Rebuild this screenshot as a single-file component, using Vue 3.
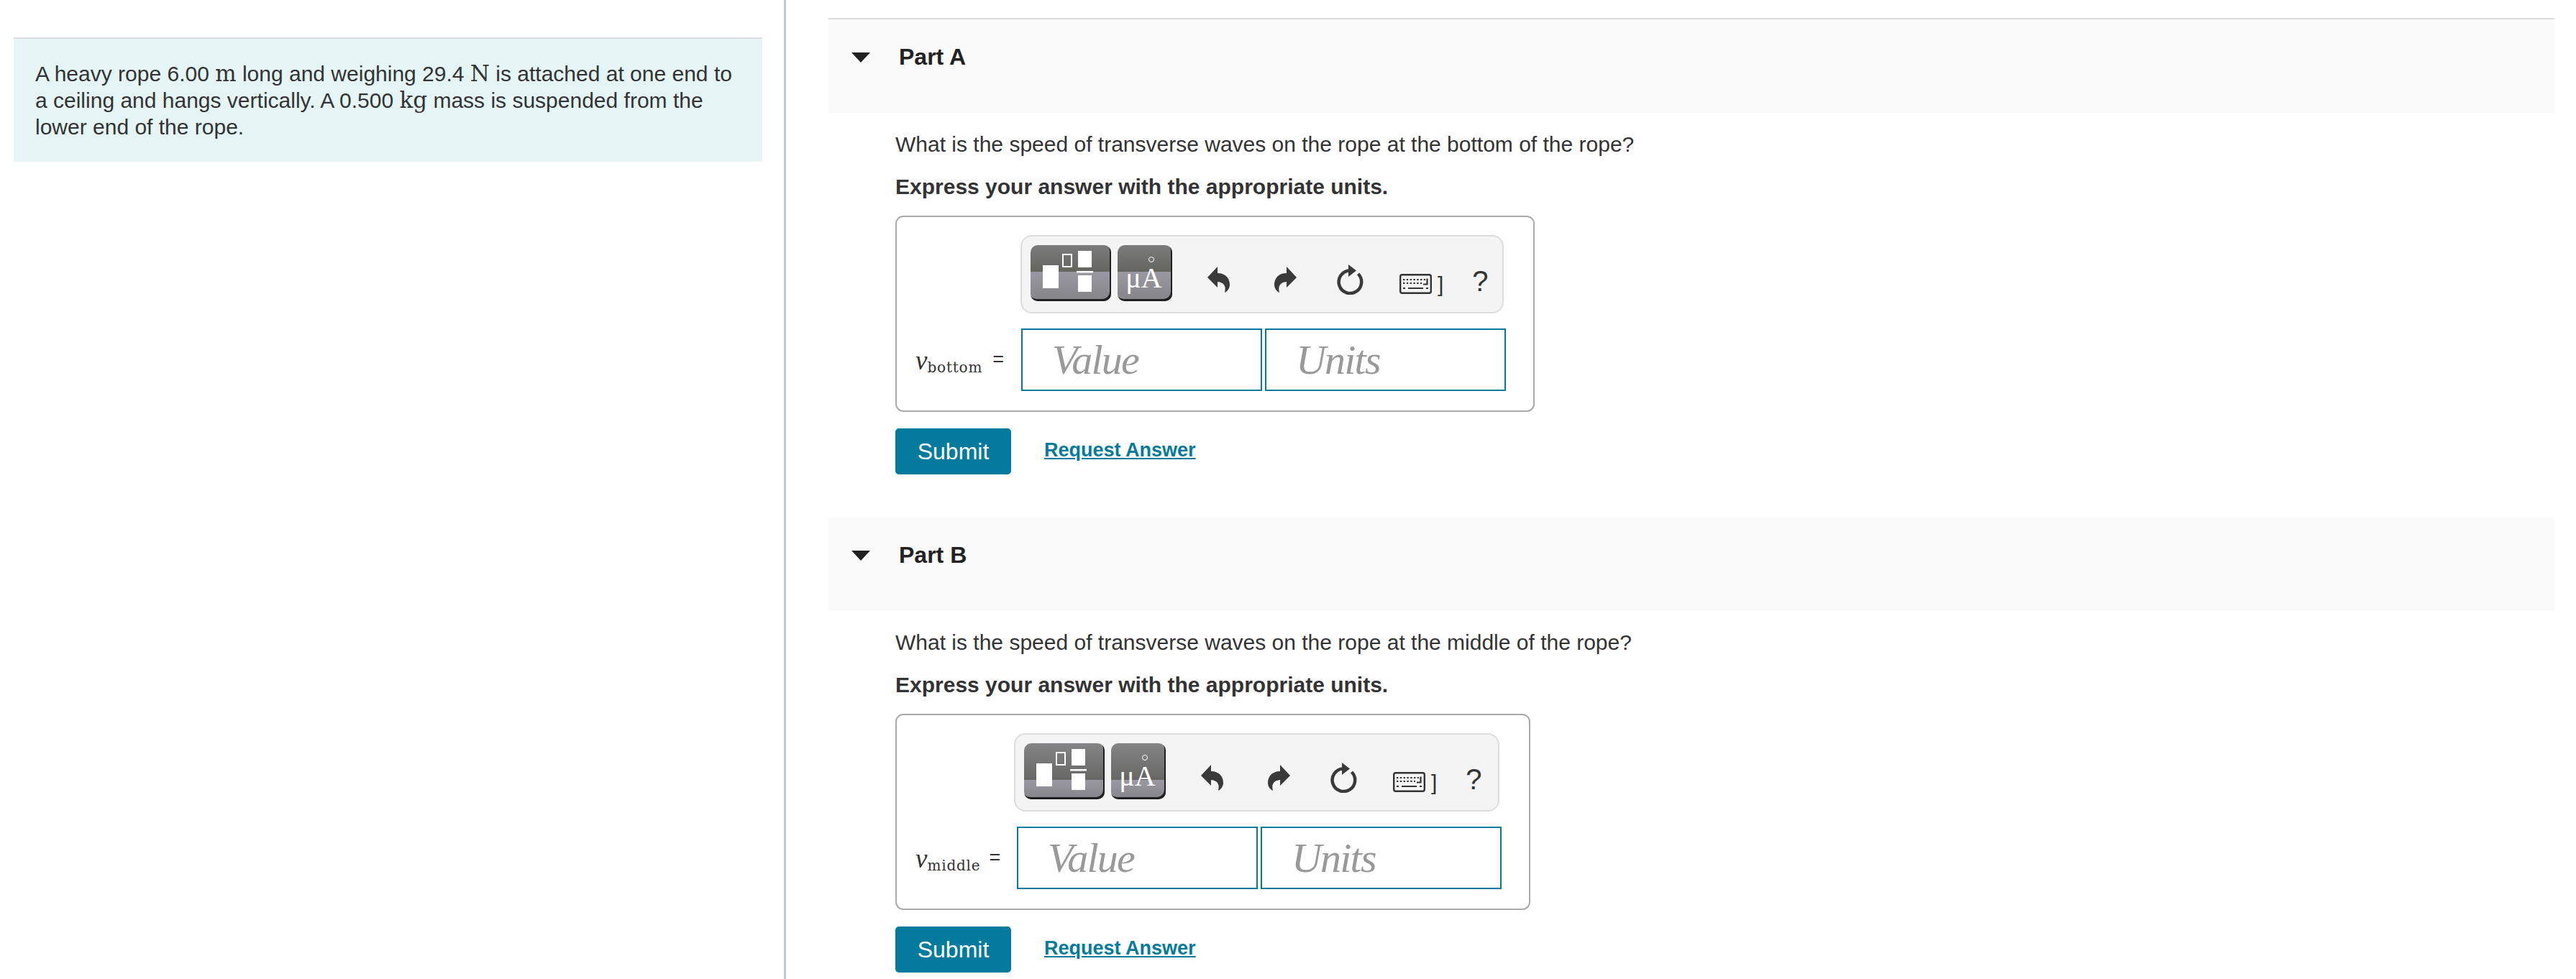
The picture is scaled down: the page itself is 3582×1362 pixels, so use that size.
<template>
  <div class="page">
    <!-- LEFT PANEL -->
    <aside class="side">
      <div class="intro">
        <p>
          A heavy rope 6.00 <span class="math">m</span> long and weighing 29.4 <span class="math">N</span> is attached at one end to
          a ceiling and hangs vertically. A 0.500 <span class="math">kg</span> mass is suspended from the
          lower end of the rope.
        </p>
      </div>
    </aside>

    <!-- PARTS -->
    <main class="parts">
      <section v-for="part in parts" :key="part.name" class="part" :class="part.cls">
        <header class="part-head">
          <span class="arrow"></span>
          <h2>{{ part.name }}</h2>
        </header>
        <div class="part-body">
          <p class="question">{{ part.question }}</p>
          <p class="hint">Express your answer with the appropriate units.</p>

          <div class="answer-box">
            <div class="toolbar">
              <button class="tool tool-tpl" type="button">
                <svg viewBox="0 0 112 78" width="112" height="78">
                  <rect x="17" y="28" width="22" height="32" fill="#fff" />
                  <rect x="45" y="13" width="12" height="17" fill="none" stroke="#fff" stroke-width="2" />
                  <rect x="66" y="8" width="19" height="23" fill="#fff" />
                  <rect x="64" y="36" width="23" height="2.5" fill="#fff" />
                  <rect x="66" y="42" width="19" height="23" fill="#fff" />
                </svg>
              </button>
              <button class="tool tool-unit" type="button"><span class="ring"></span>μA</button>

              <svg class="ico undo" viewBox="0 0 32 36" width="32" height="36">
                <path d="M0 15 L14 0 V9 C26 9 31 17 31 25 C31 30 28 34 24 36 C26 28 24 22 14 21 V29 Z" fill="#3a3a3a" />
              </svg>
              <svg class="ico redo" viewBox="0 0 32 36" width="32" height="36">
                <path d="M32 15 L18 0 V9 C6 9 1 17 1 25 C1 30 4 34 8 36 C6 28 8 22 18 21 V29 Z" fill="#3a3a3a" />
              </svg>
              <svg class="ico reset" viewBox="0 0 38 42" width="38" height="42">
                <path d="M17 8.5 A15.8 15.8 0 1 0 29.5 13" fill="none" stroke="#3a3a3a" stroke-width="4.5" />
                <path d="M16 0 L27 8.5 L16 17 Z" fill="#3a3a3a" />
              </svg>
              <svg class="ico keys" viewBox="0 0 45 28" width="45" height="28">
                <rect x="1.2" y="1.2" width="42.6" height="25.6" rx="2.5" fill="none" stroke="#333" stroke-width="2.4" />
                <path d="M5 8 H36 M5 13 H31" fill="none" stroke="#333" stroke-width="2.2" stroke-dasharray="2.4 2.4" />
                <path d="M38.5 6.5 V14.5 H33 M12 20 H33 M5 20 H8 M37 20 H40" fill="none" stroke="#333" stroke-width="2.2" />
              </svg>
              <span class="bracket">]</span>
              <span class="help">?</span>
            </div>

            <div class="answer-row">
              <span class="label"><i>v</i><sub>{{ part.sub }}</sub><span class="eq">=</span></span>
              <input class="field" type="text" placeholder="Value" />
              <input class="field" type="text" placeholder="Units" />
            </div>
          </div>

          <div class="actions">
            <button class="submit" type="button">Submit</button>
            <a class="request" href="#" @click.prevent>Request Answer</a>
          </div>
        </div>
      </section>
    </main>
  </div>
</template>

<script setup>
const parts = [
  {
    name: 'Part A',
    cls: 'part-a',
    sub: 'bottom',
    question: 'What is the speed of transverse waves on the rope at the bottom of the rope?'
  },
  {
    name: 'Part B',
    cls: 'part-b',
    sub: 'middle',
    question: 'What is the speed of transverse waves on the rope at the middle of the rope?'
  }
]
</script>

<style>
html,
body {
  margin: 0;
  background: #fff;
}
</style>

<style scoped>
.page {
  display: flex;
  width: 3582px;
  height: 1362px;
  overflow: hidden;
  font-family: "Liberation Sans", Arial, sans-serif;
  font-size: 30px;
  line-height: 37px;
  color: #333;
}

/* LEFT */
.side {
  width: 1093px;
  flex: none;
  box-sizing: border-box;
  padding: 52px 30px 0 19px;
  border-right: 3px solid #b9cde0;
}

.intro {
  height: 173px;
  box-sizing: border-box;
  padding: 30px 30px 0 30px;
  background: #e5f5f6;
  border-top: 2px solid #ddd;
}

.intro p {
  margin: 0;
}

.math {
  font-family: "DejaVu Serif", serif;
  font-size: 31px;
  line-height: 1;
}

/* PARTS */
.parts {
  flex: 1;
  padding: 25px 30px 0 59px;
}

.part-b {
  margin-top: 60px;
}

.part-head {
  height: 130px;
  display: flex;
  align-items: flex-start;
  background: #f9f9f9;
  margin: 0;
}

.part-a .part-head {
  height: 132px;
  box-sizing: border-box;
  border-top: 2px solid #ddd;
}

.arrow {
  width: 0;
  height: 0;
  margin: 46px 0 0 32px;
  border-left: 13px solid transparent;
  border-right: 13px solid transparent;
  border-top: 14px solid #222;
}

.part-head h2 {
  margin: 34px 0 0 40px;
  font-size: 32px;
  line-height: 37px;
  font-weight: 700;
  color: #222;
}

.part-body {
  padding-left: 93px;
}

.question {
  margin: 25px 0 0;
}

.hint {
  margin: 22px 0 0;
  font-weight: 700;
}

.answer-box {
  display: inline-flex;
  flex-direction: column;
  box-sizing: border-box;
  height: 273px;
  margin-top: 22px;
  padding: 25px 38px 0 26px;
  border: 2px solid #aaa;
  border-radius: 11px;
  vertical-align: top;
}

.toolbar {
  display: flex;
  align-items: flex-start;
  align-self: flex-end;
  box-sizing: border-box;
  width: 672px;
  height: 109px;
  margin-right: 3px;
  padding: 12px 0 0 12px;
  background: #f4f4f4;
  border: 2px solid #ddd;
  border-radius: 16px;
}

.part-b .toolbar {
  width: 675px;
}

.tool {
  position: relative;
  box-sizing: border-box;
  height: 78px;
  padding: 0;
  border: 0;
  border-radius: 10px;
  color: #fff;
  overflow: hidden;
  background: linear-gradient(#7b7b7d 0%, #65655f 47%, #9a98a2 47%, #858489 100%);
  box-shadow: inset -2px -3px 0 #1f1f1f;
}

.part-b .tool {
  background: linear-gradient(#858587 0%, #666664 66%, #9a98a2 66%, #858489 100%);
}

.tool-tpl {
  width: 112px;
}

.tool-tpl svg {
  display: block;
}

.tool-unit {
  width: 76px;
  margin-left: 9px;
  padding: 14px 3px 0 0;
  font-family: "Liberation Serif", serif;
  font-size: 40px;
  line-height: 46px;
}

.ring {
  position: absolute;
  left: 43px;
  top: 16px;
  width: 8px;
  height: 8px;
  box-sizing: border-box;
  border: 1.5px solid #fff;
  border-radius: 50%;
}

.ico {
  flex: none;
}

.undo {
  margin: 30px 0 0 49px;
}

.redo {
  margin: 30px 0 0 60px;
}

.reset {
  margin: 27px 0 0 56px;
}

.keys {
  margin: 40px 0 0 49px;
}

.bracket {
  margin: 36px 0 0 8px;
  font-size: 30px;
  line-height: 37px;
  color: #333;
}

.help {
  margin: 27px 0 0 40px;
  font-size: 40px;
  line-height: 46px;
  color: #333;
}

.answer-row {
  display: flex;
  align-items: center;
  margin-top: 21px;
}

.label {
  width: 147px;
  flex: none;
  font-family: "Liberation Serif", serif;
  white-space: nowrap;
  font-size: 37px;
  line-height: 40px;
}

.part-b .label {
  width: 141px;
}

.label sub {
  font-family: "DejaVu Serif", serif;
  font-size: 20px;
  letter-spacing: 0.8px;
  line-height: 0;
  vertical-align: -4px;
}

.eq {
  margin-left: 14px;
  font-family: "Liberation Sans", sans-serif;
  font-size: 27px;
  vertical-align: 5px;
}

.part-b .eq {
  margin-left: 12px;
}

.field {
  width: 335px;
  height: 87px;
  box-sizing: border-box;
  padding: 0 0 0 41px;
  border: 2px solid #047b9c;
  border-radius: 0;
  outline: none;
  font-family: "Liberation Serif", serif;
  font-style: italic;
  font-size: 58px;
  letter-spacing: -1.8px;
  color: #333;
  background: #fff;
}

.field + .field {
  margin-left: 4px;
}

.field::placeholder {
  color: #999;
  opacity: 1;
}

.actions {
  display: flex;
  align-items: center;
  margin-top: 23px;
}

.submit {
  width: 161px;
  height: 64px;
  padding: 0;
  border: 0;
  border-radius: 5px;
  background: #047b9c;
  color: #fff;
  font-family: "Liberation Sans", sans-serif;
  font-size: 32px;
}

.request {
  margin: -4px 0 0 46px;
  font-size: 27px;
  font-weight: 700;
  color: #047b9c;
  text-decoration: underline;
}
</style>
